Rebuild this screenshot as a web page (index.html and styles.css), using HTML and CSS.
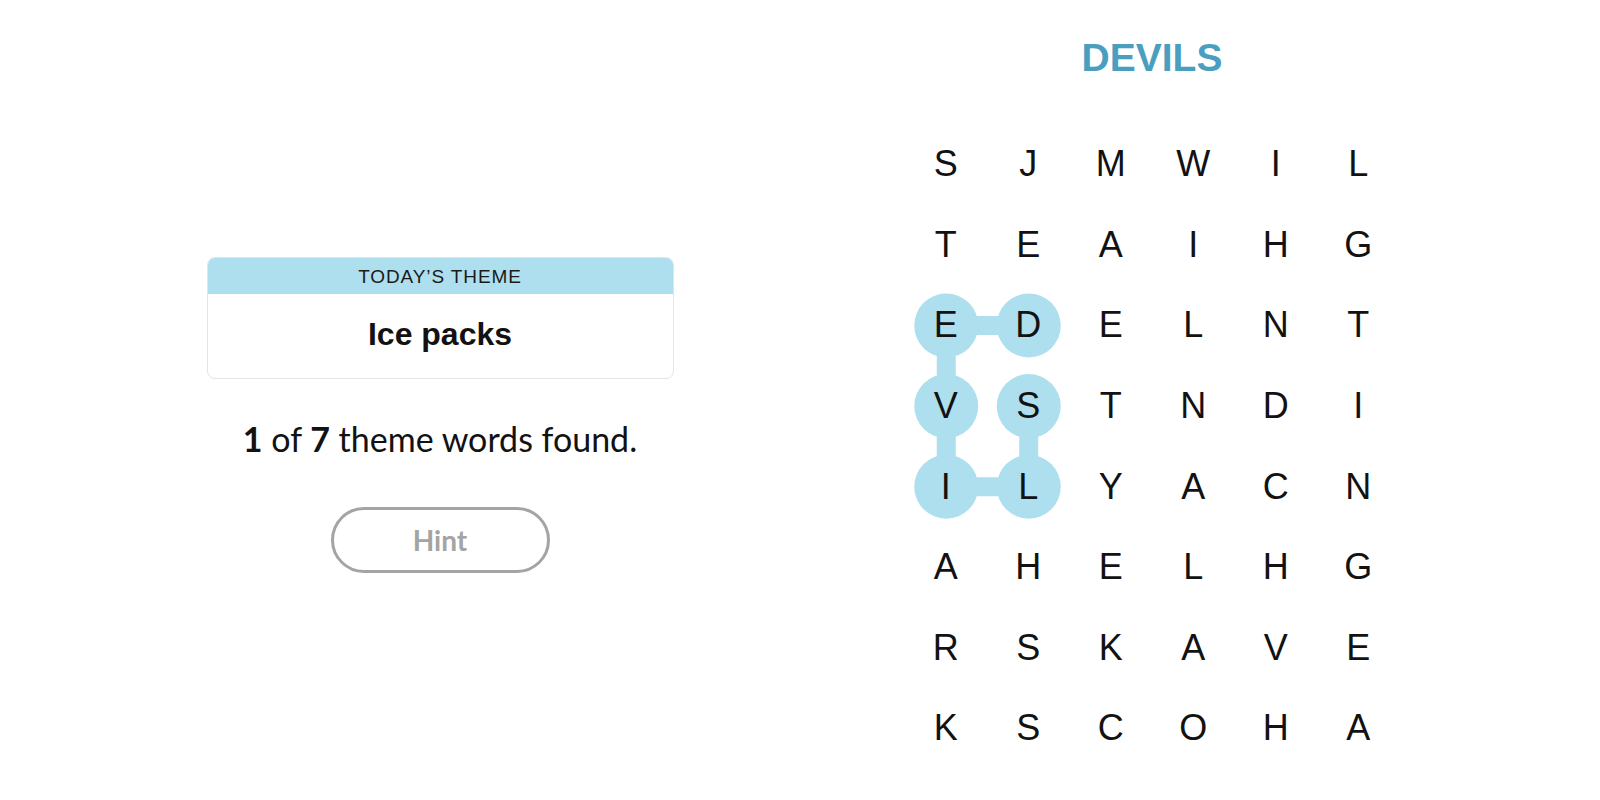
FILE: index.html
```html
<!DOCTYPE html>
<html lang="en">
<head>
    <meta charset="UTF-8">
    <title>Strands</title>
    <link rel="stylesheet" href="styles.css">
</head>
<body>
    <div class="game">
        <div class="side">
            <div class="theme-card">
                <div class="theme-head">TODAY’S THEME</div>
                <div class="theme-body">Ice packs</div>
            </div>
            <p class="progress"><b>1</b> of <b>7</b> theme words found.</p>
            <button class="hint">Hint</button>
        </div>

        <div class="board-wrap">
            <h1 class="word">DEVILS</h1>
            <div class="board">
                <svg class="path" width="495" height="645" viewBox="0 0 495 645">
                    <g stroke="#aedfee" stroke-width="19" fill="none">
                        <line x1="41.25" y1="201.5" x2="123.75" y2="201.5"/>
                        <line x1="41.25" y1="201.5" x2="41.25" y2="362.7"/>
                        <line x1="41.25" y1="362.7" x2="123.75" y2="362.7"/>
                        <line x1="123.75" y1="362.7" x2="123.75" y2="282.1"/>
                    </g>
                    <g fill="#aedfee">
                        <circle cx="41.25" cy="201.5" r="32"/>
                        <circle cx="123.75" cy="201.5" r="32"/>
                        <circle cx="41.25" cy="282.1" r="32"/>
                        <circle cx="123.75" cy="282.1" r="32"/>
                        <circle cx="41.25" cy="362.7" r="32"/>
                        <circle cx="123.75" cy="362.7" r="32"/>
                    </g>
                </svg>
                <span>S</span><span>J</span><span>M</span><span>W</span><span>I</span><span>L</span>
                <span>T</span><span>E</span><span>A</span><span>I</span><span>H</span><span>G</span>
                <span>E</span><span>D</span><span>E</span><span>L</span><span>N</span><span>T</span>
                <span>V</span><span>S</span><span>T</span><span>N</span><span>D</span><span>I</span>
                <span>I</span><span>L</span><span>Y</span><span>A</span><span>C</span><span>N</span>
                <span>A</span><span>H</span><span>E</span><span>L</span><span>H</span><span>G</span>
                <span>R</span><span>S</span><span>K</span><span>A</span><span>V</span><span>E</span>
                <span>K</span><span>S</span><span>C</span><span>O</span><span>H</span><span>A</span>
            </div>
        </div>
    </div>
</body>
</html>
```

FILE: styles.css
```css
body {
    margin: 0;
    background: #fff;
    color: #121212;
    font-family: "Liberation Sans", Arial, sans-serif;
}

.game {
    display: flex;
    width: 1600px;
    height: 800px;
}

.side {
    width: 880px;
    display: flex;
    flex-direction: column;
    align-items: center;
    padding-top: 257px;
    box-sizing: border-box;
}

.theme-card {
    width: 467px;
    border: 1px solid #e4e4e4;
    border-radius: 8px;
    overflow: hidden;
    box-sizing: border-box;
}

.theme-head {
    background: #aedfee;
    height: 36px;
    line-height: 37px;
    text-align: center;
    font-size: 19px;
    letter-spacing: 0.9px;
    color: #1a1a1a;
}

.theme-body {
    height: 84px;
    line-height: 80px;
    text-align: center;
    font-size: 32px;
    font-weight: bold;
    color: #121212;
}

.progress {
    margin: 40px 0 0;
    font-family: Lato, sans-serif;
    font-size: 34px;
    line-height: 40px;
    color: #121212;
}

.hint {
    margin-top: 48px;
    width: 219px;
    height: 66px;
    border: 3px solid #a4a4a4;
    border-radius: 33px;
    background: #fff;
    color: #a4a4a4;
    font-family: Lato, sans-serif;
    font-weight: bold;
    font-size: 28px;
}

.board-wrap {
    width: 544px;
    display: flex;
    flex-direction: column;
    align-items: center;
}

.word {
    margin: 36px 0 0;
    height: 44px;
    line-height: 44px;
    font-size: 39px;
    font-weight: bold;
    color: #4a9fc0;
}

.board {
    position: relative;
    margin-top: 44px;
    display: grid;
    grid-template-columns: repeat(6, 82.5px);
    grid-auto-rows: 80.6px;
}

.board .path {
    position: absolute;
    top: 0;
    left: 0;
}

.board span {
    position: relative;
    display: flex;
    align-items: center;
    justify-content: center;
    font-size: 36px;
    color: #121212;
}
```
